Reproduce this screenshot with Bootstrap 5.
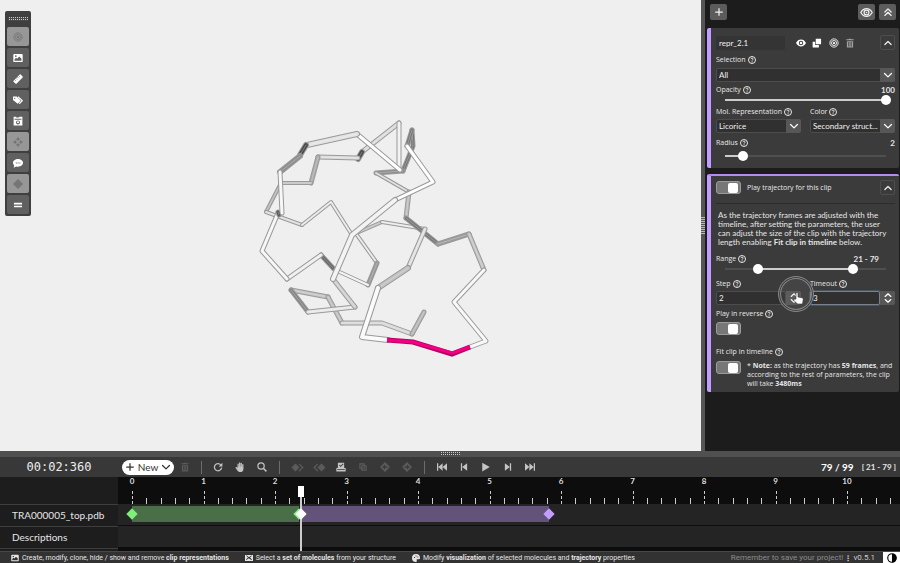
<!DOCTYPE html>
<html lang="en" data-bs-theme="dark">
<head>
<meta charset="utf-8">
<meta name="viewport" content="width=device-width, initial-scale=1">
<title>Molecule animation editor</title>
<link href="https://cdn.jsdelivr.net/npm/bootstrap@5.3.0/dist/css/bootstrap.min.css" rel="stylesheet">
<style>
body{font-family:Lato,"Open Sans",sans-serif;font-size:8px;line-height:10px;background:#0d0d0d;color:#e6e6e6}
svg{display:block}
.ico{width:10px;height:10px;fill:currentColor;flex:none}
.ico-lg{width:13px;height:13px}
.stroke{fill:none;stroke:currentColor;stroke-width:2;stroke-linecap:round;stroke-linejoin:round}
.btn{--bs-btn-padding-x:0;--bs-btn-padding-y:0;--bs-btn-font-size:8px;--bs-btn-line-height:10px;--bs-btn-border-radius:2px;display:flex;align-items:center;justify-content:center}
.gap2{margin-top:2px}.gap3{margin-top:3px}.gap5{margin-top:5px}.gap7{margin-top:7px}.gap12{margin-top:12px}
.viewport{background:#efefef;min-width:0}
.viewport>svg{width:100%;height:100%}
.palette{left:5px;top:11px;width:26px;padding:0 2px 2px;background:#3f3f3f;border-radius:2px;gap:2px}
.grip{background-image:linear-gradient(90deg,#484848 1px,transparent 1px),linear-gradient(#ccc 1px,#484848 1px);background-size:2px 2px}
.palette .grip{width:20px;height:4px;margin:6px auto 4px}
.tool{height:19px;background:#606060;color:#fff;border:0}
.tool.off,.tool.off:hover{background:#979797;color:#757575}
.splitter{width:4px;background:#555}
.splitter .grip{width:4px;height:18px;background-size:2px 2px;background-image:linear-gradient(#bbb 50%,transparent 50%)}
.side{width:195px;background:#1c1c1c;padding:4px 1px 0 2px}
.sidetop{padding:0 3px}
.sidebtn{width:17px;height:16px;background:#5c5c5c;color:#eee;border:0}
.panel{background:#3b3b3b;border-left:4px solid #c29cff;border-radius:2px;padding:7px 4px 7px 5px}
.panel.active{border-top:2px solid #b48cf0;margin-top:6px;padding-top:4px;padding-bottom:4px}
.lbl,.note{font-family:"Open Sans",sans-serif;font-size:7px}
.lbl{display:flex;align-items:center;gap:2px;height:10px;color:#e8e8e8}
.lbl .ico{width:8px;height:8px}
.field{height:14px;font-size:8px;line-height:10px;padding:0 2px;background:#303030;color:#f0f0f0;border:1px solid #4c4c4c;border-radius:2px;min-width:0;width:100%;outline:0}
.title{width:69px;background:#343434;border-color:#343434}
.repricons{width:59px;margin-left:11px}
select.field{appearance:none;padding-right:16px;text-overflow:ellipsis}
.pick{position:relative}
.cap{width:15px;height:14px;background:#575757;color:#fff;border:0;border-radius:0 2px 2px 0}
.pick .cap{position:absolute;right:0;top:0;display:flex;align-items:center;justify-content:center;pointer-events:none}
.fold{width:15px;height:15px;border:1px solid #4d4d4d;color:#eee}
.focus{border:1px solid #78828f;box-shadow:0 0 0 1px #4a5460}
.mini{color:#fff;border:0;width:10px}
.mini.dim{color:#a0a0a0}
.slide{padding:0 4px;height:10px}
.slide input{--t:linear-gradient(to right,transparent 5px,#4f4f4f 5px,#4f4f4f calc(5px + (100% - 10px)*var(--a)),#ccc 0,#ccc calc(5px + (100% - 10px)*var(--b)),#4f4f4f 0,#4f4f4f calc(100% - 5px),transparent 0);
 appearance:none;display:block;width:100%;height:10px;margin:0;background:none;grid-area:1/1;pointer-events:none}
.slide input::-webkit-slider-runnable-track{height:2px;background:var(--t)}
.slide input.over{--t:none}
.slide input::-webkit-slider-thumb{appearance:none;width:10px;height:10px;margin-top:-4px;border-radius:50%;background:#fff;pointer-events:auto}
.form-switch{padding:0;margin-bottom:0;min-height:0;display:flex;align-items:center;gap:6px}
.form-switch .form-check-input{float:none;margin:0;width:25px;height:13px;flex:none;border:1px solid #9b9b9b;border-radius:3px;background:#777!important;display:flex;justify-content:flex-end;padding:0 2px;align-items:center}
.form-switch .form-check-input::before{content:"";width:10px;height:10px;border-radius:2px;background:#fff}
.rule{border-bottom:1px solid #2c2c2c;padding-bottom:8px}
.about{line-height:9px;padding:0 8px 0 2px}
.note{line-height:9px}
.ring{position:absolute;left:62px;top:-15px;width:36px;height:36px;border:1px solid #888;border-radius:50%;background:#80808022;box-shadow:inset 0 0 0 1px #3c3c3c,inset 0 0 0 2px #888;pointer-events:none;z-index:4}
.ring svg{position:absolute;left:14px;top:15px;width:11px;height:13px}
.bottomgrip{height:6px;background:#505050}
.bottomgrip .grip{width:20px;height:4px}
.controls{height:20px;background:#383838;padding-right:4px}
.clock{width:118px;font:12px/20px "DejaVu Sans Mono",monospace;color:#eee}
.act{width:22px;height:20px;color:#c4c4c4;border:0}
.act:disabled{color:#5b5b5b;opacity:1;border:0}
.bar{width:1px;height:13px;background:#6c6c6c;margin:0 5px}
.bar-end{margin:0 6px}
.new{width:52px;height:15px;border-radius:8px;background:#fff;color:#333;border:0;font-size:10px;gap:3px;margin-left:4px}
.new:hover{background:#fff;color:#333}
.frames{font-size:10px;color:#fff}
.names{width:118px;background:#1d1d1d;font-size:10px}
.names>div{padding-left:12px;border-top:1px solid #3e3e3e}
.row-top{height:27px}
.names>.row-top{border:0}
.lane{height:22px;line-height:21px}
.base{height:3px;border-top:1px solid #3e3e3e}
.tracks{min-width:0;overflow:hidden}
.tracks .lane{background:#242424;border-bottom:1px solid #0d0d0d;padding:2px 0 3px 14px}
.ruler{padding-left:14px;font-size:8px;color:#ddd}
.second{flex:0 0 calc(100%/10.74)}
.second b{width:0;height:8px;line-height:8px;display:flex;justify-content:center}
.second i{flex:1;height:6px;border-left:1px solid #ccc}
.second i:first-child{height:13px;border-left:1px dashed #ccc}
.clip{position:relative;flex:none;background:#4a6e47}
.clip.violet{background:#63527a;margin-left:2px}
.key{position:absolute;top:4px;width:8px;height:8px;rotate:45deg;background:#7fee7a}
.violet .key{background:#c29cff}
.key.at0{left:-4px}.key.at1{right:-4px}
.violet .key.at0{background:#fff;z-index:3}
.stage{position:absolute;inset:0 0 0 14px;pointer-events:none}
.head{position:absolute;top:9px;bottom:0;width:2px;margin-left:-1px;background:#ccc;z-index:2}
.head::before{content:"";position:absolute;left:-2px;width:6px;height:11px;background:#fff}
.foot{height:12px;background:#323232;border-top:1px solid #484848;padding-left:11px;white-space:nowrap}
.foot .ico{width:8px;height:8px}
.foot .cue{display:flex;align-items:center;gap:3px;margin-right:16px;font-family:Roboto,sans-serif;font-size:7px}
.save,.ver{font-family:Roboto,sans-serif;color:#8b8b8b}
.ver{color:#ccc}
.foot .theme{width:17px;height:12px;background:#fff;color:#000;border:0;border-radius:0}
.foot .theme .ico{width:10px;height:10px}
</style>
<script src="https://cdn.jsdelivr.net/npm/bootstrap@5.3.0/dist/js/bootstrap.bundle.min.js"></script>
</head>
<body class="vh-100 d-flex flex-column overflow-hidden">
<svg class="d-none">
<symbol id="i-target" viewBox="0 0 16 16"><g fill="none" stroke="currentColor" stroke-width="1.4"><circle cx="8" cy="8" r="6.6"/><circle cx="8" cy="8" r="4"/></g><circle cx="8" cy="8" r="1.8"/></symbol>
<symbol id="i-image" viewBox="0 0 16 16"><path fill-rule="evenodd" d="M2 1.500h12a1.500 1.500 0 0 1 1.500 1.500v10a1.500 1.500 0 0 1-1.500 1.500H2A1.500 1.500 0 0 1 .5 13V3A1.500 1.500 0 0 1 2 1.500zM2.500 12.500h11V9L10 5.500 6.500 9 5 7.500 2.500 10zM4.500 3.500a1.400 1.400 0 1 0 0 2.800 1.400 1.400 0 0 0 0-2.800z"/></symbol>
<symbol id="i-ruler" viewBox="0 0 16 16"><g transform="rotate(-45 8 8)"><path d="M1 5h14a1 1 0 0 1 1 1v4.500a1 1 0 0 1-1 1H1a1 1 0 0 1-1-1V6a1 1 0 0 1 1-1z"/><path stroke="#606060" d="M3.500 5v2.500M6.500 5v2.500M9.500 5v2.500M12.500 5v2.500"/></g></symbol>
<symbol id="i-tags" viewBox="0 0 16 16"><path fill-rule="evenodd" d="M0 2.500h6l6.500 6.500-5 5L0 8zM2.800 4.200a1.100 1.100 0 1 0 0 2.200 1.100 1.100 0 0 0 0-2.200z"/><path d="M8 2.800L14.800 9 10 14" fill="none" stroke="currentColor" stroke-width="1.800"/></symbol>
<symbol id="i-camera" viewBox="0 0 16 16"><path fill-rule="evenodd" d="M1 1h4v1.500h4L10.500 1H15v14H1zM2.500 4.500V6h11V4.500zM8 7a3.200 3.200 0 1 0 0 6.400A3.200 3.200 0 0 0 8 7z"/><circle cx="8" cy="10" r="1.700"/></symbol>
<symbol id="i-move" viewBox="0 0 16 16"><path d="M8 0l3 4-3 2-3-2zM8 16l3-4-3-2-3 2zM0 8l4-3 2 3-2 3zM16 8l-4-3-2 3 2 3z"/></symbol>
<symbol id="i-chat" viewBox="0 0 16 16"><path fill-rule="evenodd" d="M8 1.500c4.500 0 8 2.800 8 6.200s-3.500 6.200-8 6.200c-1 0-2-.1-2.900-.4L1 15.500l1-3.700C.8 10.700 0 9.300 0 7.700c0-3.400 3.500-6.200 8-6.200zM4.500 7v1.800h1.600V7zM7.300 7v1.800h1.600V7zM10.100 7v1.800h1.600V7z"/></symbol>
<symbol id="i-diamond" viewBox="0 0 16 16"><path d="M8 0l8 8-8 8-8-8z"/></symbol>
<symbol id="i-equal" viewBox="0 0 16 16"><path d="M1.500 4.500h13v2.600h-13zM1.500 9h13v2.600h-13z"/></symbol>
<symbol id="i-plus" viewBox="0 0 16 16"><path d="M7 2h2v5h5v2H9v5H7V9H2V7h5z"/></symbol>
<symbol id="i-eye" viewBox="0 0 16 16"><path fill="none" stroke="currentColor" stroke-width="1.500" d="M1 8c1.800-3.200 4.200-4.800 7-4.800S13.200 4.800 15 8c-1.800 3.200-4.200 4.800-7 4.800S2.800 11.200 1 8z"/><circle cx="8" cy="8" r="3" fill="none" stroke="currentColor" stroke-width="1.500"/><circle cx="8" cy="8" r="1"/></symbol>
<symbol id="i-eyefill" viewBox="0 0 16 16"><path fill-rule="evenodd" d="M0 8c2-3.700 4.700-5.500 8-5.500S14 4.300 16 8c-2 3.700-4.700 5.500-8 5.500S2 11.700 0 8zM8 4.500a3.500 3.500 0 1 0 0 7 3.500 3.500 0 0 0 0-7z"/><circle cx="8" cy="8" r="2"/></symbol>
<symbol id="i-clone" viewBox="0 0 16 16"><path d="M6 1h8.500v9H6zM1 6h4v5h6v4H1z"/></symbol>
<symbol id="i-trash" viewBox="0 0 16 16"><path fill-rule="evenodd" d="M2 2h3.500l1-1h3l1 1H14v1.600H2zM3 5h10v10H3zM5.200 6.500v7h1v-7zM7.500 6.500v7h1v-7zM9.800 6.500v7h1v-7z"/></symbol>
<symbol id="i-up" viewBox="0 0 16 16"><path class="stroke" d="M3 10.500l5-5 5 5"/></symbol>
<symbol id="i-up2" viewBox="0 0 16 16"><path class="stroke" d="M3 8l5-5 5 5M3 13.500l5-5 5 5"/></symbol>
<symbol id="i-down" viewBox="0 0 16 16"><path class="stroke" d="M2.500 5.500l5.500 5.500 5.500-5.500"/></symbol>
<symbol id="i-spin" viewBox="0 0 16 16"><path class="stroke" d="M3.500 5.500L8 1.300l4.500 4.200M3.500 10.500L8 14.700l4.500-4.200"/></symbol>
<symbol id="i-help" viewBox="0 0 16 16"><circle cx="8" cy="8" r="7" fill="none" stroke="currentColor" stroke-width="2"/><path d="M5.800 6.300C5.900 4.800 7 4.200 8.100 4.200c1.300 0 2.200.8 2.200 1.900 0 1.600-2.200 1.700-2.200 3.300" fill="none" stroke="currentColor" stroke-width="1.800"/><circle cx="8.100" cy="11.700" r="1.200"/></symbol>
<symbol id="i-redo" viewBox="0 0 16 16"><path d="M12.500 4.500A5.800 5.800 0 1 0 13.800 9" fill="none" stroke="currentColor" stroke-width="2"/><path d="M15 1v6H9z"/></symbol>
<symbol id="i-hand" viewBox="0 0 16 16"><path d="M4 9V3.300a1 1 0 0 1 2 0V7h.5V1.500a1 1 0 0 1 2 0V7H9V2a1 1 0 0 1 2 0v5.500h.5V4a1 1 0 0 1 2 0v7c0 3-2 5-5 5-2.500 0-4-1.200-5-3L1 9.500c-.6-1.200.8-2 1.600-1.200z"/></symbol>
<symbol id="i-search" viewBox="0 0 16 16"><path d="M10.500 10.500L15 15" fill="none" stroke="currentColor" stroke-width="2.400"/><circle cx="6.500" cy="6.500" r="5" fill="none" stroke="currentColor" stroke-width="1.900"/></symbol>
<symbol id="i-keynext" viewBox="0 0 16 16"><path d="M5.500 3l5 5-5 5-5-5z"/><path d="M10 3.500L14.500 8 10 12.500" fill="none" stroke="currentColor" stroke-width="1.600"/></symbol>
<symbol id="i-keyprev" viewBox="0 0 16 16"><path d="M10.500 3l5 5-5 5-5-5z"/><path d="M6 3.500L1.500 8 6 12.500" fill="none" stroke="currentColor" stroke-width="1.600"/></symbol>
<symbol id="i-tray" viewBox="0 0 16 16"><path fill-rule="evenodd" d="M3 1h10v8l2.500 1v5H.5v-5L3 9zM5 5.500L7.500 8 12 3.500l-1-1-3.500 3.400L6 4.500zM2 11.500v1.200h12v-1.200z"/></symbol>
<symbol id="i-copy" viewBox="0 0 16 16"><path d="M3 3h7v7H3zM6 6h7v7H6z" fill="none" stroke="currentColor" stroke-width="1.800"/></symbol>
<symbol id="i-kleft" viewBox="0 0 16 16"><path fill-rule="evenodd" d="M8 0l8 8-8 8-8-8zM8 4L4 8l4 4V9h4V7H8z"/></symbol>
<symbol id="i-kright" viewBox="0 0 16 16"><path fill-rule="evenodd" d="M8 0l8 8-8 8-8-8zM8 4l4 4-4 4V9H4V7h4z"/></symbol>
<symbol id="i-first" viewBox="0 0 16 16"><path d="M0 2h2v12H0zM9 2v12L2 8zM16 2v12L9 8z"/></symbol>
<symbol id="i-prev" viewBox="0 0 16 16"><path d="M3 2h2v12H3zM13 2v12L5 8z"/></symbol>
<symbol id="i-play" viewBox="0 0 16 16"><path d="M2 1l12 7-12 7z"/></symbol>
<symbol id="i-next" viewBox="0 0 16 16"><path d="M13 2h-2v12h2zM3 2v12l8-6z"/></symbol>
<symbol id="i-last" viewBox="0 0 16 16"><path d="M16 2h-2v12h2zM7 2v12l7-6zM0 2v12l7-6z"/></symbol>
<symbol id="i-envelope" viewBox="0 0 16 16"><path fill-rule="evenodd" d="M0 2h16v12H0zM2 3.500l4 3.500-4 4 1 1 4.500-3.500L12.500 12l1.500-1-4-4 4-3.500-1.500-.5L8 6.500 3.500 3z"/></symbol>
<symbol id="i-palette" viewBox="0 0 16 16"><path fill-rule="evenodd" d="M8 0a8 8 0 0 1 8 8c0 3-3 3-5 2.500-2-.4-2 1-1.500 2.500S9.500 16 8 16A8 8 0 0 1 8 0zM4 6v2h2V6zM7 3v2h2V3zM10.500 5v2h2V5z"/></symbol>
<symbol id="i-half" viewBox="0 0 16 16"><circle cx="8" cy="8" r="6.800" fill="none" stroke="currentColor" stroke-width="1.800"/><path d="M8 1a7 7 0 0 1 0 14z"/></symbol>
</svg>

<main class="d-flex flex-grow-1" style="min-height:0">
  <section class="viewport flex-grow-1 position-relative">
    <svg id="molecule" viewBox="0 0 701 451" role="img" aria-label="Protein backbone"></svg>
    <nav class="palette position-absolute d-flex flex-column" aria-label="Tools">
      <div class="grip"></div>
      <button class="btn tool off" aria-label="Center"><svg class="ico"><use href="#i-target"/></svg></button>
      <button class="btn tool" aria-label="Representations"><svg class="ico"><use href="#i-image"/></svg></button>
      <button class="btn tool" aria-label="Measure"><svg class="ico"><use href="#i-ruler"/></svg></button>
      <button class="btn tool" aria-label="Labels"><svg class="ico"><use href="#i-tags"/></svg></button>
      <button class="btn tool" aria-label="Camera"><svg class="ico"><use href="#i-camera"/></svg></button>
      <button class="btn tool off" aria-label="Move"><svg class="ico"><use href="#i-move"/></svg></button>
      <button class="btn tool" aria-label="Descriptions"><svg class="ico"><use href="#i-chat"/></svg></button>
      <button class="btn tool off" aria-label="Keyframe"><svg class="ico"><use href="#i-diamond"/></svg></button>
      <button class="btn tool" aria-label="Menu"><svg class="ico"><use href="#i-equal"/></svg></button>
    </nav>
  </section>
  <div class="splitter d-flex align-items-center"><div class="grip"></div></div>
  <aside class="side flex-shrink-0">
    <div class="sidetop d-flex gap-1 mb-2">
      <button class="btn sidebtn me-auto" aria-label="Add"><svg class="ico"><use href="#i-plus"/></svg></button>
      <button class="btn sidebtn" aria-label="Visibility"><svg class="ico ico-lg"><use href="#i-eye"/></svg></button>
      <button class="btn sidebtn" aria-label="Collapse all"><svg class="ico"><use href="#i-up2"/></svg></button>
    </div>

    <section class="panel">
      <div class="d-flex align-items-center">
        <input class="field title" value="repr_2.1" aria-label="Name">
        <div class="repricons d-flex justify-content-between">
          <button class="btn mini" aria-label="Show"><svg class="ico"><use href="#i-eyefill"/></svg></button>
          <button class="btn mini" aria-label="Clone"><svg class="ico"><use href="#i-clone"/></svg></button>
          <button class="btn mini" aria-label="Center"><svg class="ico"><use href="#i-target"/></svg></button>
          <button class="btn mini dim" aria-label="Delete"><svg class="ico"><use href="#i-trash"/></svg></button>
        </div>
        <button class="btn fold ms-auto" aria-label="Collapse"><svg class="ico"><use href="#i-up"/></svg></button>
      </div>
      <label class="lbl gap5" for="sel">Selection <svg class="ico"><use href="#i-help"/></svg></label>
      <div class="pick gap3"><select class="field d-block" id="sel"><option>All</option></select><span class="cap"><svg class="ico"><use href="#i-down"/></svg></span></div>
      <div class="d-flex justify-content-between gap3"><label class="lbl" for="opa">Opacity <svg class="ico"><use href="#i-help"/></svg></label><output class="fw-bold">100</output></div>
      <div class="slide d-grid"><input type="range" id="opa" value="100" style="--a:0;--b:1"></div>
      <div class="row g-0 gap2" style="column-gap:9px">
        <div class="col"><label class="lbl" for="rep">Mol. Representation <svg class="ico"><use href="#i-help"/></svg></label>
          <div class="pick gap2"><select class="field d-block" id="rep"><option>Licorice</option></select><span class="cap"><svg class="ico"><use href="#i-down"/></svg></span></div></div>
        <div class="col"><label class="lbl" for="col">Color <svg class="ico"><use href="#i-help"/></svg></label>
          <div class="pick gap2"><select class="field d-block" id="col"><option>Secondary struct...</option></select><span class="cap"><svg class="ico"><use href="#i-down"/></svg></span></div></div>
      </div>
      <div class="d-flex justify-content-between gap5"><label class="lbl" for="rad">Radius <svg class="ico"><use href="#i-help"/></svg></label><output class="fw-bold">2</output></div>
      <div class="slide d-grid gap3"><input type="range" id="rad" min="1" max="10" value="2" style="--a:0;--b:.111"></div>
    </section>

    <section class="panel active">
      <div class="d-flex align-items-center rule">
        <div class="form-check form-switch"><input class="form-check-input" type="checkbox" role="switch" id="playt" checked><label class="lbl" for="playt">Play trajectory for this clip</label></div>
        <button class="btn fold ms-auto" aria-label="Collapse"><svg class="ico"><use href="#i-up"/></svg></button>
      </div>
      <p class="about gap7 mb-0">As the trajectory frames are adjusted with the timeline, after setting the parameters, the user can adjust the size of the clip with the trajectory length enabling <b>Fit clip in timeline</b> below.</p>
      <div class="d-flex justify-content-between gap7 pe-3"><label class="lbl" for="from">Range <svg class="ico"><use href="#i-help"/></svg></label><output class="fw-bold">21 - 79</output></div>
      <div class="slide d-grid"><input type="range" id="from" min="1" max="99" value="21" style="--a:.204;--b:.796"><input class="over" type="range" aria-label="Range end" min="1" max="99" value="79"></div>
      <div class="row g-0 gap5" style="column-gap:9px">
        <div class="col"><label class="lbl" for="step">Step <svg class="ico"><use href="#i-help"/></svg></label>
          <div class="d-flex position-relative gap2"><input class="field" id="step" value="2"><button class="btn cap flex-shrink-0" aria-label="Change step"><svg class="ico"><use href="#i-spin"/></svg></button>
          <span class="ring"><svg viewBox="0 0 11 13"><path fill="#fff" stroke="#333" stroke-width=".6" d="M3 7V1.500a1 1 0 0 1 2 0V5l4 .8c1 .2 1.300 1 1.200 2L9.500 12H4.500L1 8.500C.5 7.500 1.500 6.500 2.300 7.200z"/></svg></span></div></div>
        <div class="col"><label class="lbl" for="timeout">Timeout <svg class="ico"><use href="#i-help"/></svg></label>
          <div class="d-flex gap2"><input class="field focus" id="timeout" value="3"><button class="btn cap flex-shrink-0" aria-label="Change timeout"><svg class="ico"><use href="#i-spin"/></svg></button></div></div>
      </div>
      <label class="lbl mt-1" for="rev">Play in reverse <svg class="ico"><use href="#i-help"/></svg></label>
      <div class="form-check form-switch gap3"><input class="form-check-input" type="checkbox" role="switch" id="rev" checked></div>
      <label class="lbl gap12" for="fit">Fit clip in timeline <svg class="ico"><use href="#i-help"/></svg></label>
      <div class="form-check form-switch align-items-start mt-1"><input class="form-check-input" type="checkbox" role="switch" id="fit" checked>
        <p class="note mb-0">* <b>Note:</b> as the trajectory has <b>59 frames</b>, and according to the rest of parameters, the clip will take <b>3480ms</b></p></div>
    </section>
  </aside>
</main>

<section class="flex-shrink-0">
  <div class="bottomgrip d-flex justify-content-center align-items-center"><div class="grip"></div></div>
  <div class="controls d-flex align-items-center">
    <div class="clock text-center">00:02:360</div>
    <button class="btn new"><svg class="ico"><use href="#i-plus"/></svg>New<svg class="ico"><use href="#i-down"/></svg></button>
    <button class="btn act" disabled aria-label="Delete"><svg class="ico"><use href="#i-trash"/></svg></button>
    <span class="bar"></span>
    <button class="btn act" aria-label="Redo"><svg class="ico"><use href="#i-redo"/></svg></button>
    <button class="btn act" aria-label="Pan"><svg class="ico"><use href="#i-hand"/></svg></button>
    <button class="btn act" aria-label="Zoom"><svg class="ico"><use href="#i-search"/></svg></button>
    <span class="bar bar-end"></span>
    <button class="btn act" disabled aria-label="Key after"><svg class="ico ico-lg"><use href="#i-keynext"/></svg></button>
    <button class="btn act" disabled aria-label="Key before"><svg class="ico ico-lg"><use href="#i-keyprev"/></svg></button>
    <button class="btn act" aria-label="Save clip"><svg class="ico"><use href="#i-tray"/></svg></button>
    <button class="btn act" disabled aria-label="Copy"><svg class="ico"><use href="#i-copy"/></svg></button>
    <button class="btn act" disabled aria-label="Move left"><svg class="ico"><use href="#i-kleft"/></svg></button>
    <button class="btn act" disabled aria-label="Move right"><svg class="ico"><use href="#i-kright"/></svg></button>
    <span class="bar bar-end"></span>
    <button class="btn act" aria-label="First"><svg class="ico"><use href="#i-first"/></svg></button>
    <button class="btn act" aria-label="Previous"><svg class="ico"><use href="#i-prev"/></svg></button>
    <button class="btn act" aria-label="Play"><svg class="ico"><use href="#i-play"/></svg></button>
    <button class="btn act" aria-label="Next"><svg class="ico"><use href="#i-next"/></svg></button>
    <button class="btn act" aria-label="Last"><svg class="ico"><use href="#i-last"/></svg></button>
    <b class="frames ms-auto me-2">79 / 99</b><b>[ 21 - 79 ]</b>
  </div>
  <div class="d-flex">
    <div class="names flex-shrink-0">
      <div class="row-top"></div>
      <div class="lane">TRA000005_top.pdb</div>
      <div class="lane">Descriptions</div>
      <div class="base"></div>
    </div>
    <div class="tracks flex-grow-1 position-relative">
      <div class="ruler row-top d-flex" id="ruler"></div>
      <div class="lane d-flex" id="lane"></div>
      <div class="lane"></div>
      <div class="stage"><div class="head" id="head"></div></div>
    </div>
  </div>
</section>

<footer class="foot d-flex align-items-center flex-shrink-0">
  <span class="cue"><svg class="ico"><use href="#i-image"/></svg><span>Create, modify, clone, hide / show and remove <b>clip representations</b></span></span>
  <span class="cue"><svg class="ico"><use href="#i-envelope"/></svg><span>Select a <b>set of molecules</b> from your structure</span></span>
  <span class="cue"><svg class="ico"><use href="#i-palette"/></svg><span>Modify <b>visualization</b> of selected molecules and <b>trajectory</b> properties</span></span>
  <span class="save ms-auto">Remember to save your project!</span><b class="mx-1">⁝</b><span class="ver me-2">v0.5.1</span>
  <button class="btn theme" aria-label="Theme"><svg class="ico"><use href="#i-half"/></svg></button>
</footer>

<script>
const span = 10.74;
const ruler = document.getElementById('ruler');
for (let s = 0; s <= 10; s++) {
  ruler.insertAdjacentHTML('beforeend', `<div class="second d-flex flex-column justify-content-between"><b>${s}</b><div class="d-flex align-items-end">${'<i></i>'.repeat(5)}</div></div>`);
}
const lane = document.getElementById('lane');
[[2.33, ''], [3.48, 'violet']].forEach(([len, cls]) => {
  lane.insertAdjacentHTML('beforeend', `<div class="clip ${cls}" style="width:${len / span * 100}%"><span class="key at0"></span><span class="key at1"></span></div>`);
});
document.getElementById('head').style.left = 2.36 / span * 100 + '%';

// Backbone sticks, back to front: points, colour, width
const sticks = [
  ['399,123 362,152', '#dcdcdc', 5], ['362,152 358,159', '#4c4c4c', 6], ['358,158 318,157', '#dcdcdc', 5], ['318,157 311,183', '#ababab', 5],
  ['311,183 281,183', '#c4c4c4', 4], ['281,183 266,212', '#b4b4b4', 4], ['266,212 302,225', '#dedede', 4], ['302,225 331,202 352,235', '#e8e8e8', 4],
  ['352,235 382,222', '#bdbdbd', 4], ['382,222 425,229', '#e9e9e9', 4],
  ['403,171 413,146 412,130', '#747474', 5], ['403,171 376,173', '#8c8c8c', 5], ['376,173 409,192', '#dadada', 4], ['409,192 406,218', '#bdbdbd', 5],
  ['406,218 438,244', '#777', 5], ['438,244 469,234', '#9b9b9b', 5], ['469,234 484,270', '#c4c4c4', 5],
  ['357,235 377,263', '#e8e8e8', 4], ['377,263 368,285', '#999', 5], ['368,285 333,269', '#f2f2f2', 4], ['333,268 321,255', '#666', 5],
  ['321,255 287,279', '#eee', 5], ['287,279 262,251 278,213', '#f6f6f6', 5], ['278,212 279,215', '#555', 5],
  ['328,297 291,290', '#c4c4c4', 5], ['291,290 308,312', '#858585', 5], ['328,297 342,323', '#c0c0c0', 5], ['342,323 382,323 412,334', '#d8d8d8', 5], ['412,334 424,312', '#b8b8b8', 5],
  ['308,312 355,307', '#e8e8e8', 5], ['355,307 333,279', '#d0d0d0', 5],
  ['412,130 407,146', '#777', 5], ['399,123 399,170', '#f2f2f2', 5], ['400,170 357,134', '#fff', 5], ['357,134 307,145', '#e3e3e3', 6], ['306,145 300,155', '#4c4c4c', 6], ['300,156 280,172', '#8e8e8e', 6], ['280,172 282,213', '#f6f6f6', 5],
  ['407,146 433,182 395,200', '#fff', 5], ['395,200 352,235 333,279', '#f2f2f2', 6],
  ['425,229 408,268', '#e0e0e0', 5], ['408,268 378,288', '#c2c2c2', 6], ['378,288 362,337 388,340', '#fafafa', 6],
  ['484,270 454,302 486,341 470,347', '#f8f8f8', 5]
];
const draw = ([p, c, w]) => `<polyline points="${p}" stroke="#9a9a9a" stroke-width="${w}"/><polyline points="${p}" stroke="${c}" stroke-width="${w - 2}"/><polyline points="${p}" stroke="#ffffff44" stroke-width="1"/>`;
document.getElementById('molecule').innerHTML = `<g fill="none" stroke-linecap="round" stroke-linejoin="round">${sticks.map(draw).join('')}</g>
<polyline points="387,340 413,342 452,354 470,347" fill="none" stroke="#bb0063" stroke-width="5"/><polyline points="387,340 413,342 452,353 470,347" fill="none" stroke="#f00082" stroke-width="3"/>`;
</script>
</body>
</html>
